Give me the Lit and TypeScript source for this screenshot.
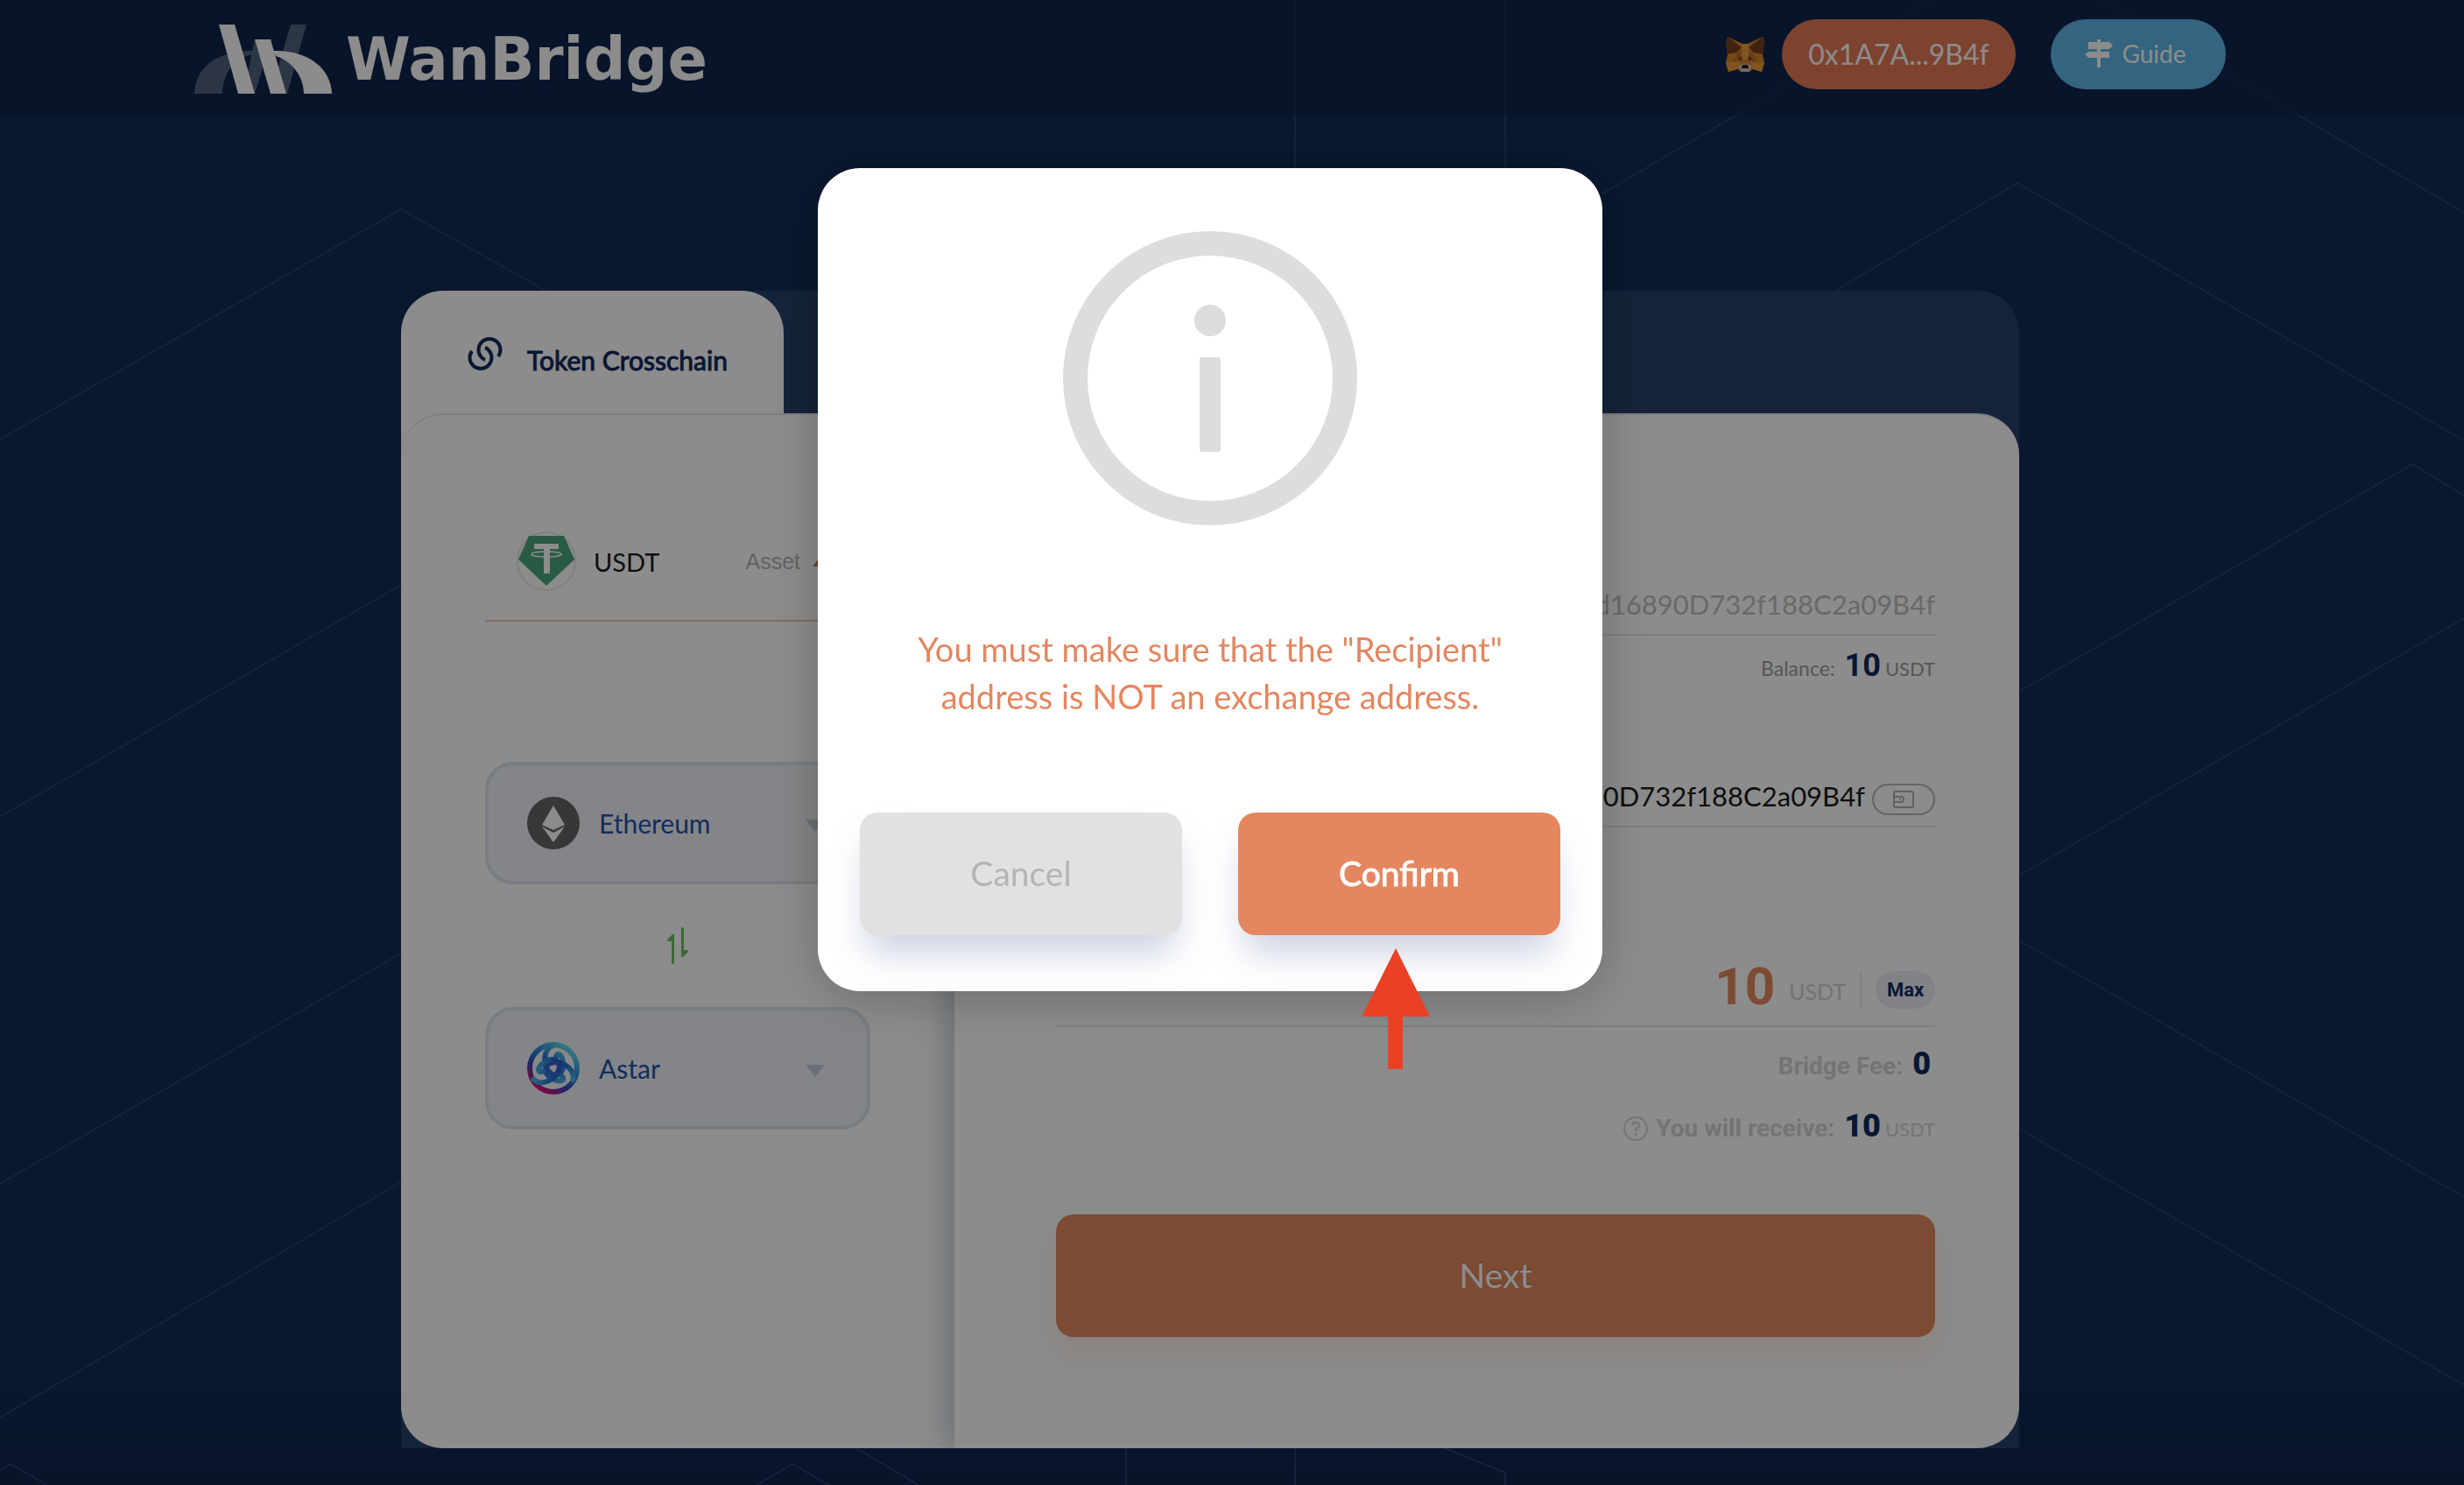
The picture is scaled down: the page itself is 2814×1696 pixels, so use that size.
import { LitElement, html, css, svg } from "lit";
import { customElement, state } from "lit/decorators.js";

const foxIcon = svg`
  <polygon points="2,0 19,8 25,8 42,0 44,6 42,20 44,30 41,40 31,37 26,40 18,40 13,37 3,40 0,30 2,20 0,6" fill="#d9852b"/>
  <polygon points="2,0 18,12 12,18 2,20 0,8" fill="#763e1a"/>
  <polygon points="42,0 26,12 32,18 42,20 44,8" fill="#763e1a"/>
  <polygon points="18,8 26,8 26,20 22,28 18,20" fill="#ec9a3c"/>
  <polygon points="12,19 18,14 18,27 8,29" fill="#c8702a"/>
  <polygon points="32,19 26,14 26,27 36,29" fill="#c8702a"/>
  <polygon points="0,30 15,29 13,37 3,40" fill="#ec9a3c"/>
  <polygon points="44,30 29,29 31,37 41,40" fill="#ec9a3c"/>
  <polygon points="13,24 18,23 18,28" fill="#5a4a3c"/>
  <polygon points="31,24 26,23 26,28" fill="#5a4a3c"/>
  <polygon points="14,33 19,31 25,31 30,33 27,40 17,40" fill="#d5bfb2"/>
  <polygon points="19,32 25,32 26,36 18,36" fill="#161616"/>`;

const chainIcon = svg`
  <g fill="none" stroke="#102b5e" stroke-width="4">
    <path d="M5 17 A12.5 12.5 0 1 0 25 17 Q23 14 20 13"/>
    <path d="M35 23 A12.5 12.5 0 1 0 15 23 Q17 26 20 27"/>
  </g>`;

const astarIcon = svg`
  <defs>
    <linearGradient id="ring" x1="0.85" y1="0.1" x2="0.25" y2="0.95">
      <stop offset="0" stop-color="#5fd8e8"/>
      <stop offset="0.35" stop-color="#2f8fe0"/>
      <stop offset="0.7" stop-color="#3548b8"/>
      <stop offset="1" stop-color="#d8107c"/>
    </linearGradient>
    <linearGradient id="loop" gradientUnits="userSpaceOnUse" x1="46" y1="8" x2="14" y2="50">
      <stop offset="0" stop-color="#5ccbe8"/>
      <stop offset="0.5" stop-color="#2472d0"/>
      <stop offset="1" stop-color="#6a2cae"/>
    </linearGradient>
  </defs>
  <circle cx="30" cy="30" r="30" fill="#f6f7f9"/>
  <circle cx="30" cy="30" r="27" fill="none" stroke="url(#ring)" stroke-width="6"/>
  <g fill="none" stroke="url(#loop)" stroke-width="6" stroke-linecap="round">
    <path d="M30 4 C18 8 18 26 25 34 C33 43 42 36 41 24 C40 12 33 12 33 18"/>
    <path d="M30 4 C18 8 18 26 25 34 C33 43 42 36 41 24 C40 12 33 12 33 18" transform="rotate(120 30 30)"/>
    <path d="M30 4 C18 8 18 26 25 34 C33 43 42 36 41 24 C40 12 33 12 33 18" transform="rotate(240 30 30)"/>
  </g>`;

const ethIcon = svg`
  <circle cx="30" cy="30" r="30" fill="#646464"/>
  <g fill="#fff">
    <polygon points="30,10 43,32 30,38 17,32"/>
    <polygon points="30,41 43,34 30,52 17,34"/>
  </g>`;

const tetherIcon = svg`
  <circle cx="34" cy="34" r="33" fill="#fff" stroke="#e8e8e8" stroke-width="2"/>
  <polygon points="14,5 54,5 66,32 34,62 2,32" fill="#4ca57c"/>
  <rect x="20" y="14" width="28" height="6" fill="#fff"/>
  <rect x="31" y="14" width="7" height="34" fill="#fff"/>
  <ellipse cx="34" cy="26" rx="17" ry="3" fill="none" stroke="#fff" stroke-width="1.5"/>`;

@customElement("app-root")
export class AppRoot extends LitElement {
  @state() private recipient = "90D732f188C2a09B4f";

  static styles = css`
    :host {
      display: block;
      font-family: Lato, "Liberation Sans", sans-serif;
      color: #1a1a1a;
    }
    * {
      box-sizing: border-box;
    }
    button,
    input,
    select {
      font: inherit;
      color: inherit;
      border: 0;
      padding: 0;
      margin: 0;
      background: none;
    }
    svg {
      display: block;
      flex: none;
    }
    .page {
      position: relative;
      min-height: 100vh;
      padding: 0 50px 42px 0;
      background: linear-gradient(#112d56 0, #112d56 92%, #10254d 100%);
      overflow: hidden;
    }
    .lines {
      position: absolute;
      inset: 0;
      width: 100%;
      height: 100%;
    }
    .header {
      position: relative;
      margin-right: -50px;
      padding: 0 50px 0 0;
      background: rgba(16, 34, 74, 0.6);
    }
    .header-inner {
      display: flex;
      align-items: center;
      max-width: 2320px;
      height: 132px;
      margin: 0 auto;
      padding-bottom: 8px;
    }
    .brand {
      display: flex;
      align-items: center;
      gap: 16px;
      margin-right: auto;
      padding-top: 12px;
      color: #fff;
      text-decoration: none;
      font: bold 67px/80px "DejaVu Sans", sans-serif;
    }
    .pill {
      display: flex;
      align-items: center;
      justify-content: center;
      height: 80px;
      padding-bottom: 2px;
      border-radius: 40px;
      color: #fff;
      font-size: 32px;
    }
    .wallet {
      width: 267px;
      margin: 0 40px 0 20px;
      background: #e47a57;
    }
    .guide {
      width: 200px;
      gap: 10px;
      padding-right: 6px;
      background: #5fb6e7;
      font-size: 28px;
      text-decoration: none;
    }
    .frame {
      position: relative;
      max-width: 1848px;
      margin: 200px auto 0;
      border-radius: 48px 48px 0 0;
      background: #264169;
    }
    .tab {
      display: flex;
      align-items: flex-start;
      gap: 28px;
      width: 437px;
      height: 188px;
      margin-bottom: -48px;
      padding: 52px 0 0 76px;
      border-radius: 48px 48px 0 0;
      background: #fff;
      color: #102b5e;
      font-size: 30px;
      line-height: 54px;
      -webkit-text-stroke: 1px #102b5e;
    }
    .card {
      position: relative;
      display: flex;
      border-top: 2px solid #e8e8e8;
      border-radius: 48px;
      background: #fff;
      overflow: hidden;
    }
    .chains {
      width: 632px;
      padding: 133px 96px 0;
    }
    .token {
      display: flex;
      align-items: center;
      width: 100%;
      padding: 0 48px 33px 36px;
      border-bottom: 2px solid #f0c6b3;
      font-size: 29px;
      gap: 20px;
    }
    .asset {
      margin-left: auto;
      margin-right: -6px;
      color: #b4b4b4;
      font: 25px/28px "Liberation Sans", sans-serif;
    }
    .chain {
      display: flex;
      align-items: center;
      gap: 22px;
      height: 140px;
      padding: 0 48px 0 44px;
      border: 4px solid #dde4eb;
      border-radius: 32px;
      background: #f0f3f7;
      color: #2152a9;
      font-size: 30px;
    }
    .first {
      margin-top: 160px;
    }
    .chain select {
      flex: 1;
      appearance: none;
      line-height: 60px;
    }
    .swap {
      display: flex;
      align-items: center;
      justify-content: center;
      width: 100%;
      height: 140px;
    }
    .transfer {
      flex: 1;
      padding: 194px 96px 127px 116px;
      box-shadow: -10px 0 30px rgba(30, 60, 100, 0.26);
    }
    .row {
      display: flex;
      align-items: flex-end;
      justify-content: flex-end;
      border-bottom: 2px solid #e6e6e6;
    }
    .address {
      padding-bottom: 12px;
      font-size: 31px;
      line-height: 44px;
      gap: 8px;
    }
    .from {
      color: #c0c0c0;
    }
    .recipient {
      margin-top: 97px;
    }
    .recipient input {
      flex: 1;
      min-width: 0;
      height: 44px;
      text-align: right;
    }
    .paste {
      display: flex;
      align-items: center;
      justify-content: center;
      width: 72px;
      height: 36px;
      border: 2px solid #b8b8b8;
      border-radius: 18px;
    }
    .info {
      display: flex;
      align-items: baseline;
      justify-content: flex-end;
      height: 60px;
      gap: 5px;
      color: #d4d4d4;
      font: bold 28px/60px Roboto, sans-serif;
    }
    .info b {
      margin-left: 6px;
      color: #102b5e;
      font-size: 36px;
    }
    .info small {
      font: 22px/60px Lato, sans-serif;
    }
    .balance {
      margin-top: 4px;
      color: #9c9c9c;
      font: 23px/60px Lato, sans-serif;
    }
    .balance b {
      font-family: Roboto, sans-serif;
    }
    .amount {
      margin-top: 155px;
      padding-bottom: 19px;
      gap: 16px;
    }
    .amount input {
      flex: 1;
      min-width: 0;
      height: 52px;
      color: #e48860;
      font: bold 60px/52px Roboto, sans-serif;
      text-align: right;
    }
    .unit {
      color: #d3d3d3;
      font-size: 25px;
      line-height: 40px;
    }
    .max {
      width: 68px;
      height: 43px;
      border-radius: 22px;
      background: #e9edf3;
      color: #102b5e;
      font: bold 22px/40px Roboto, sans-serif;
    }
    .rule {
      width: 2px;
      height: 43px;
      background: #ebebeb;
    }
    .fee {
      margin: 12px 5px 11px 0;
    }
    .help {
      align-self: center;
      margin-top: 6px;
      margin-right: 4px;
    }
    .action {
      height: 140px;
      padding-bottom: 2px;
      border-radius: 20px;
      font-size: 39px;
      color: #fff;
      background: #e48660;
    }
    .next {
      width: 100%;
      margin-top: 71px;
      background: #e48860;
      box-shadow: 0 20px 40px rgba(228, 136, 96, 0.16);
      text-shadow: 0 -2px 0 rgba(0, 0, 0, 0.12);
    }
    .mask {
      position: fixed;
      inset: 0;
      display: flex;
      justify-content: center;
      align-items: flex-start;
      padding: 192px 50px 0 0;
      background: rgba(0, 0, 0, 0.45);
    }
    .modal {
      position: relative;
      width: 896px;
      padding: 72px 48px 64px;
      border-radius: 48px;
      background: #fff;
      box-shadow: 0 8px 60px rgba(0, 0, 0, 0.24);
    }
    .modal-icon {
      margin: 0 auto;
    }
    .message {
      margin: 0;
      padding: 114px 40px 106px;
      color: #e48660;
      font-size: 38px;
      line-height: 54px;
      text-align: center;
    }
    .buttons {
      display: grid;
      grid-template-columns: 1fr 1fr;
      gap: 64px;
    }
    .buttons .action {
      box-shadow: 0 28px 40px -8px rgba(140, 154, 190, 0.46);
    }
    .buttons .cancel {
      background: #e1e1e1;
      color: #b4b4b4;
    }
    .confirm {
      -webkit-text-stroke: 1px #fff;
    }
    .pointer {
      position: absolute;
      left: 621px;
      top: 891px;
    }
  `;

  private chain(id: string, name: string, icon: unknown, first = false) {
    return html`
      <div class="chain ${first ? "first" : ""}">
        <svg width="60" height="60" viewBox="0 0 60 60" aria-hidden="true">${icon}</svg>
        <select id=${id} aria-label=${name}>
          <option>${name}</option>
        </select>
        <svg width="22" height="20" viewBox="0 0 22 20" aria-hidden="true">
          <polygon points="0,6 22,6 11,20" fill="#c4cad9" />
        </svg>
      </div>
    `;
  }

  render() {
    return html`
      <div class="page">
        <svg class="lines" viewBox="0 0 2814 1696" preserveAspectRatio="xMinYMin slice" aria-hidden="true">
          <g fill="none" stroke="#26406a" stroke-width="2">
            <path d="M0 502 L458 239 L623 332" />
            <path d="M0 933 L458 668 M0 1352 L458 1089 M0 1619 L458 1350" />
            <path d="M0 1679 L12 1672 L54 1696 M864 1696 L905 1672 L947 1696 M978 1654 L1049 1696" />
            <path d="M1479 0 V192 M1719 0 V192 M1286 1654 V1696 M1479 1654 V1696 M1650 1654 L1719 1682 V1696" />
            <path d="M2207 0 L1830 221 M2401 0 L2814 243 M2096 332 L2304 209 L2814 503" />
            <path d="M2306 790 L2755 530 L2814 566 M2306 1000 L2814 706" />
            <path d="M2306 1074 L2814 1367 M2306 1289 L2814 1582" />
          </g>
        </svg>

        <header class="header">
          <div class="header-inner">
            <a class="brand" href="#">
              <svg width="157" height="80" viewBox="0 0 157 80" aria-hidden="true">
                <g fill="#fff" opacity="0.28">
                  <polygon points="110,0 128,0 106,79 87,79" />
                  <polygon points="69,17 88,17 69,79 56,79" />
                  <path d="M0 79 C2 45 30 29 72 30 L72 33 C46 36 32 56 32 79 Z" />
                </g>
                <g fill="#fff">
                  <polygon points="28,0 46,0 69,79 50,79" />
                  <polygon points="69,17 87,17 105,79 87,79" />
                  <path d="M90 30 C130 29 156 50 157 79 L125 79 C125 60 112 42 93 36 Z" />
                </g>
              </svg>
              <span>WanBridge</span>
            </a>
            <svg width="44" height="40" viewBox="0 0 44 40" aria-hidden="true">${foxIcon}</svg>
            <button class="pill wallet">0x1A7A...9B4f</button>
            <a class="pill guide" href="#">
              <svg width="32" height="32" viewBox="0 0 32 32" aria-hidden="true">
                <path
                  fill="#fff"
                  d="M14 0h4v3h10l4 4-4 4H18v3h10v7H18v11h-4V21H4l-4-4 4-3h10v-3H4V3h10z"
                />
              </svg>
              Guide
            </a>
          </div>
        </header>

        <main class="frame">
          <div class="tab">
            <svg width="40" height="40" viewBox="0 0 40 40" aria-hidden="true">${chainIcon}</svg>
            Token Crosschain
          </div>
          <div class="card">
            <section class="chains">
              <button class="token">
                <svg width="68" height="68" viewBox="0 0 68 68" aria-hidden="true">${tetherIcon}</svg>
                <span>USDT</span>
                <span class="asset">Asset</span>
                <svg width="18" height="12" viewBox="0 0 18 12" aria-hidden="true">
                  <polygon points="9,0 18,12 0,12" fill="#e4784f" />
                </svg>
              </button>
              ${this.chain("from", "Ethereum", ethIcon, true)}
              <button class="swap" aria-label="Swap">
                <svg width="24" height="42" viewBox="0 0 24 42" aria-hidden="true">
                  <path
                    fill="#69c362"
                    d="M6 8 Q8 7 8 9 V41 Q6.500 43 5 41 V16 H1 Q-1 15 1 13z M16 1 Q17.500 -1 19 1 V26 H23 Q25 27 23 29 L18 34 Q16 35 16 33z"
                  />
                </svg>
              </button>
              ${this.chain("to", "Astar", astarIcon)}
            </section>

            <section class="transfer">
              <div class="row address from">d16890D732f188C2a09B4f</div>
              <div class="info balance">
                <span>Balance:</span>
                <b>10</b>
                <small>USDT</small>
              </div>
              <div class="row address recipient">
                <input
                  aria-label="Recipient"
                  .value=${this.recipient}
                  @input=${(e: Event) => (this.recipient = (e.target as HTMLInputElement).value)}
                />
                <button class="paste" aria-label="Wallet">
                  <svg width="24" height="20" viewBox="0 0 24 20" aria-hidden="true">
                    <g fill="none" stroke="#b0b0b0" stroke-width="2">
                      <rect x="1" y="1" width="22" height="18" rx="2" />
                      <path d="M1 7 H9 Q12 7 12 10 Q12 13 9 13 H1" />
                    </g>
                    <circle cx="8" cy="10" r="1" fill="#b0b0b0" />
                  </svg>
                </button>
              </div>
              <div class="row amount">
                <input aria-label="Amount" value="10" />
                <span class="unit">USDT</span>
                <span class="rule"></span>
                <button class="max">Max</button>
              </div>
              <div class="info fee">
                <span>Bridge Fee:</span>
                <b>0</b>
              </div>
              <div class="info">
                <svg class="help" width="28" height="28" viewBox="0 0 28 28" aria-hidden="true">
                  <g fill="none" stroke="#d4d4d4" stroke-width="2">
                    <circle cx="14" cy="14" r="13" />
                    <path d="M10 11 Q10 7 14 7 Q18 7 18 10.500 Q18 13 14 14.500 V17" />
                  </g>
                  <circle cx="14" cy="20.500" r="1.500" fill="#d4d4d4" />
                </svg>
                <span>You will receive:</span>
                <b>10</b>
                <small>USDT</small>
              </div>
              <button class="action next">Next</button>
            </section>
          </div>
        </main>
      </div>

      <div class="mask">
        <div class="modal" role="dialog" aria-modal="true">
          <svg class="modal-icon" width="336" height="336" viewBox="0 0 336 336" aria-hidden="true">
            <circle cx="168" cy="168" r="154" fill="none" stroke="#ddd" stroke-width="28" />
            <circle cx="168" cy="102" r="18" fill="#ddd" />
            <rect x="156" y="144" width="24" height="108" rx="3" fill="#ddd" />
          </svg>
          <p class="message">You must make sure that the "Recipient" address is NOT an exchange address.</p>
          <div class="buttons">
            <button class="action cancel">Cancel</button>
            <button class="action confirm">Confirm</button>
          </div>
          <svg class="pointer" width="78" height="138" viewBox="0 0 78 138" aria-hidden="true">
            <path fill="#ea4025" d="M39 0 L78 78 H47 V138 H30 V78 H0z" />
          </svg>
        </div>
      </div>
    `;
  }
}
